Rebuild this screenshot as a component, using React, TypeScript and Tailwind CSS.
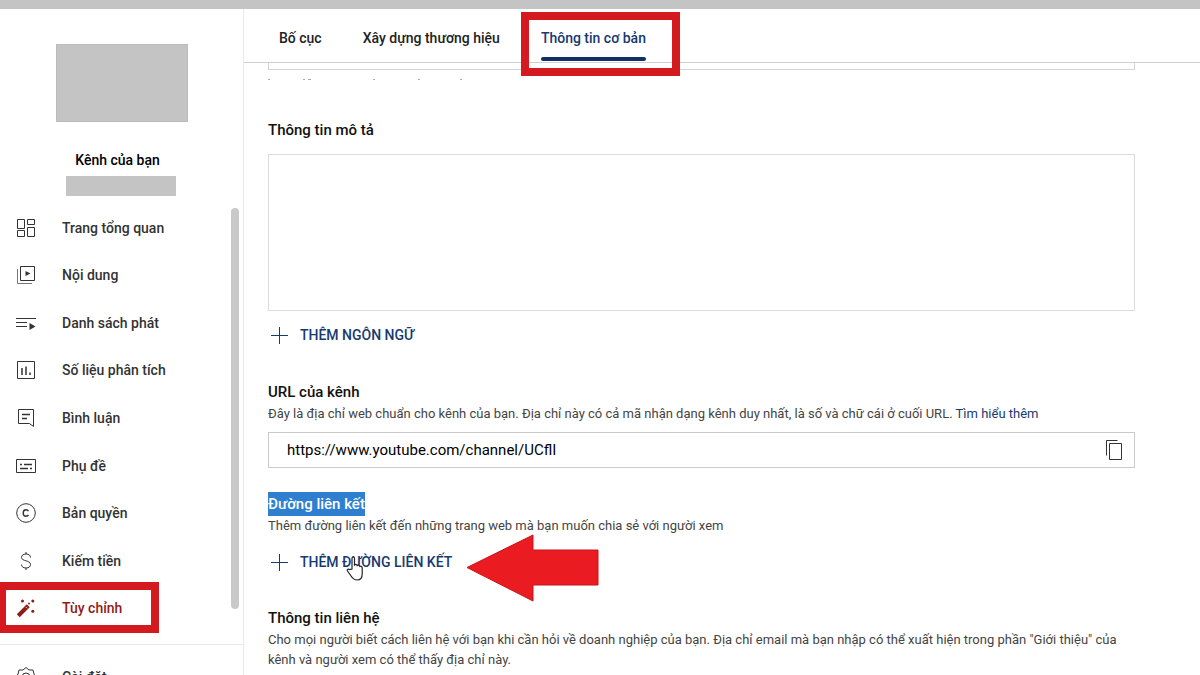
import type { ReactNode } from "react";

type IconProps = {
  children: ReactNode;
};

function Icon({ children }: IconProps) {
  return (
    <svg
      className="w-5 h-5 shrink-0"
      viewBox="0 0 20 20"
      fill="none"
      stroke="currentColor"
      strokeWidth="1"
      aria-hidden="true"
    >
      {children}
    </svg>
  );
}

const menu = [
  {
    label: "Trang tổng quan",
    icon: (
      <Icon>
        <path d="M1.5 1.5h7v9h-7zM11.5 1.5h7v5h-7zM1.5 12.5h7v6h-7zM11.5 9.5h7v9h-7z" />
      </Icon>
    ),
  },
  {
    label: "Nội dung",
    icon: (
      <Icon>
        <path d="M4.5 1.5h14v14h-14z" />
        <path d="M1.5 4v14.5H16" stroke="#777" />
        <path d="M9.5 6v5l5-2.5z" fill="currentColor" stroke="none" />
      </Icon>
    ),
  },
  {
    label: "Danh sách phát",
    icon: (
      <Icon>
        <path d="M0 5.5h20M0 9.5h11M0 13.5h11" />
        <path d="M13.5 10v7l6-3.5z" fill="currentColor" stroke="none" />
      </Icon>
    ),
  },
  {
    label: "Số liệu phân tích",
    icon: (
      <Icon>
        <path d="M1.5 1.5h17v17h-17z" />
        <path d="M6 8v7M10 6.5v8.5M14 12.5v2.5" strokeWidth="1.5" />
      </Icon>
    ),
  },
  {
    label: "Bình luận",
    icon: (
      <Icon>
        <path d="M2.5 1.5h15v17l-4-3h-11z" />
        <path d="M6 6.5h8M6 10.5h5" strokeWidth="1.5" />
      </Icon>
    ),
  },
  {
    label: "Phụ đề",
    icon: (
      <Icon>
        <path d="M.5 3.5h19v13H.5z" />
        <path d="M4 8.5h2M8 8.5h8M4 12.5h8M14 12.5h2" strokeWidth="1.5" />
      </Icon>
    ),
  },
  {
    label: "Bản quyền",
    icon: (
      <Icon>
        <circle cx="10" cy="10" r="9.3" />
        <path d="M12.5 8.2c-.6-1-1.4-1.4-2.5-1.4-1.7 0-2.8 1.3-2.8 3.2s1.1 3.2 2.8 3.2c1.1 0 1.9-.4 2.5-1.4" strokeWidth="1.4" />
      </Icon>
    ),
  },
  {
    label: "Kiếm tiền",
    icon: (
      <Icon>
        <path d="M14.5 6.5c0-2-1.500-3.500-4.500-3.500S5.500 4.500 5.500 6.500c0 4 9 2.500 9 7 0 2-1.500 3.500-4.500 3.500s-4.500-1.500-4.500-3.500M10 1v2M10 17v2" />
      </Icon>
    ),
  },
  {
    label: "Tùy chỉnh",
    active: true,
    icon: (
      <Icon>
        <path d="M.8 16.3 10.8 6.3l2.900 2.900-10 10z" fill="currentColor" stroke="none" />
        <path d="m10 9.200 1 1" stroke="#fff" />
        <g fill="currentColor" stroke="none">
          <circle cx="6.500" cy="3" r="1.500" />
          <circle cx="16.800" cy="3" r="1.500" />
          <circle cx="16.800" cy="13.200" r="1.500" />
          <circle cx="13" cy="5.500" r="1" />
        </g>
      </Icon>
    ),
  },
];

function Sidebar() {
  return (
    <aside className="relative w-[244px] shrink-0 border-r border-[#ebebeb] flex flex-col">
      {/* Channel */}
      <div className="flex flex-col items-center pt-[35px]">
        <div className="w-[132px] h-[78px] bg-[#c4c4c4] border border-[#bcbcbc]"></div>
        <p className="mt-7 mr-2 text-sm leading-5 font-medium text-black">
          Kênh của bạn
        </p>
        <div className="mt-1.5 mr-0.5 w-[110px] h-5 bg-[#c4c4c4]"></div>
      </div>

      {/* Menu */}
      <nav className="mt-2 grid auto-rows-fr h-[428px] shrink-0">
        {menu.map((item) => (
          <a
            key={item.label}
            href="#"
            className={
              item.active
                ? "relative flex items-center gap-[26px] pl-4 text-sm font-medium text-[#8f1d16]"
                : "flex items-center gap-[26px] pl-4 text-sm font-medium text-[#333]"
            }
          >
            {item.icon}
            {item.label}
            {item.active && (
              <span className="absolute -left-0.5 -top-0.5 w-[161px] h-[51px] border-8 border-[#d51a1f]"></span>
            )}
          </a>
        ))}
      </nav>

      <div className="mt-3 border-t border-[#e8e8e8] pt-[22px]">
        <a
          href="#"
          className="flex items-center gap-[26px] pl-4 text-sm font-medium text-[#333]"
        >
          <Icon>
            <path d="M10 .5 13 3h4l1 4 1.500 3-1.500 3-1 4h-4l-3 2.500L7 17H3l-1-4L.5 10 2 7l1-4h4z" />
            <circle cx="10" cy="10" r="4" />
          </Icon>
          Cài đặt
        </a>
      </div>

      {/* Scrollbar */}
      <div className="absolute right-1 top-[199px] w-2 h-[401px] rounded-full bg-[#c9c9c9]"></div>
    </aside>
  );
}

function AddButton({ label }: { label: string }) {
  return (
    <button className="flex items-center gap-3 pl-[3px] h-6 text-sm font-medium text-[#173a70]">
      <svg className="w-[17px] h-[17px]" viewBox="0 0 17 17" stroke="currentColor" aria-hidden="true">
        <path d="M8.500 0v17M0 8.500h17" />
      </svg>
      {label}
    </button>
  );
}

function Tabs() {
  return (
    <header className="h-[54px] shrink-0 border-b border-[#cfcfcf] flex gap-[41px] pl-[35px] text-sm font-medium text-[#222]">
      <button className="h-[58px]">Bố cục</button>
      <button className="h-[58px]">Xây dựng thương hiệu</button>
      <button className="relative h-[58px] text-[#163a70]">
        Thông tin cơ bản
        <span className="absolute inset-x-0 top-12 h-1 rounded-sm bg-[#142f66]"></span>
        <span className="absolute z-10 -left-5 -right-[34px] top-[3px] h-16 border-8 border-[#d51a1f]"></span>
      </button>
    </header>
  );
}

export default function App() {
  return (
    <div className="h-screen overflow-hidden flex flex-col bg-white font-['Roboto','Noto_Sans',sans-serif]">
      <div className="h-[9px] shrink-0 bg-[#c4c4c4]"></div>

      <div className="flex flex-1 min-h-0">
        <Sidebar />

        <main className="flex-1 min-w-0 flex flex-col">
          <Tabs />

          <div className="pl-6 pr-[65px] flex-1 min-h-0">
            {/* End of the field scrolled under the tabs */}
            <div className="h-[7px] border border-t-0 border-[#d4d4d4]"></div>
            <svg className="mt-2 h-1 w-52" viewBox="0 0 208 4" fill="#aaa" aria-hidden="true">
              <path d="M0 1h2v1H0zM35 1h2v1h-2zM40 1h3v1h-3zM105 1h2v1h-2zM150 1h2v1h-2zM192 1h2v1h-2z" />
            </svg>

            {/* Description */}
            <label htmlFor="description" className="block mt-[38px] text-[15px] leading-5 font-medium text-[#111]">
              Thông tin mô tả
            </label>
            <textarea
              id="description"
              className="block mt-3.5 w-full h-[157px] border border-[#dcdcdc] resize-none outline-none"
            />
            <div className="mt-3">
              <AddButton label="THÊM NGÔN NGỮ" />
            </div>

            {/* Channel URL */}
            <label htmlFor="url" className="block mt-[35px] text-[15px] leading-5 font-medium text-[#111]">
              URL của kênh
            </label>
            <p className="mt-0.5 text-[13px] leading-5 text-[#444]">
              Đây là địa chỉ web chuẩn cho kênh của bạn. Địa chỉ này có cả mã nhận dạng kênh duy nhất, là số và chữ
              cái ở cuối URL.{" "}
              <a href="#" className="text-[#173a70]">
                Tìm hiểu thêm
              </a>
            </p>
            <div className="mt-2 flex items-center h-9 pl-[18px] pr-2.5 border border-[#cacaca]">
              <input
                id="url"
                readOnly
                defaultValue="https://www.youtube.com/channel/UCflI"
                className="flex-1 min-w-0 text-[15px] text-black outline-none"
              />
              <button aria-label="Sao chép">
                <svg className="w-5 h-5" viewBox="0 0 20 20" fill="none" stroke="#333" aria-hidden="true">
                  <path d="M5.500 3.500h12v16h-12zM2.500 15.500V.5h11" />
                </svg>
              </button>
            </div>

            {/* Links */}
            <h2 className="mt-6 w-fit bg-[#2f7fd0] text-[15px] leading-6 font-medium text-white">Đường liên kết</h2>
            <p className="text-[13px] leading-5 text-[#444]">
              Thêm đường liên kết đến những trang web mà bạn muốn chia sẻ với người xem
            </p>
            <div className="relative w-fit mt-3.5">
              <AddButton label="THÊM ĐƯỜNG LIÊN KẾT" />
              <svg className="absolute left-[78px] top-1 w-5 h-7" viewBox="0 0 20 28" aria-hidden="true">
                <path
                  d="M6 15V4.500c0-2 2.500-2 2.500 0V11c1-1 2.500-.6 2.700.6 1-.8 2.400-.4 2.600.8 1.200-.6 2.400.2 2.400 1.600V20c0 4-2 6-5 6-3.500 0-5-2-6.500-4.500L1.500 17c-.8-1.500.8-2.500 2-1.500z"
                  fill="#fff"
                  stroke="#222"
                  strokeWidth="1.200"
                />
              </svg>
              <svg className="absolute left-[198px] -top-4 w-[134px] h-[68px]" viewBox="0 0 134 68" aria-hidden="true">
                <path d="M1 33.500 67 1v15h65v35H67v16z" fill="#ea1c22" stroke="#c4161c" />
              </svg>
            </div>

            {/* Contact */}
            <h2 className="mt-[34px] text-[15px] leading-5 font-medium text-[#111]">Thông tin liên hệ</h2>
            <p className="mt-0.5 text-[13px] leading-5 text-[#444]">
              Cho mọi người biết cách liên hệ với bạn khi cần hỏi về doanh nghiệp của bạn. Địa chỉ email mà bạn nhập
              có thể xuất hiện trong phần "Giới thiệu" của kênh và người xem có thể thấy địa chỉ này.
            </p>
          </div>
        </main>
      </div>
    </div>
  );
}
